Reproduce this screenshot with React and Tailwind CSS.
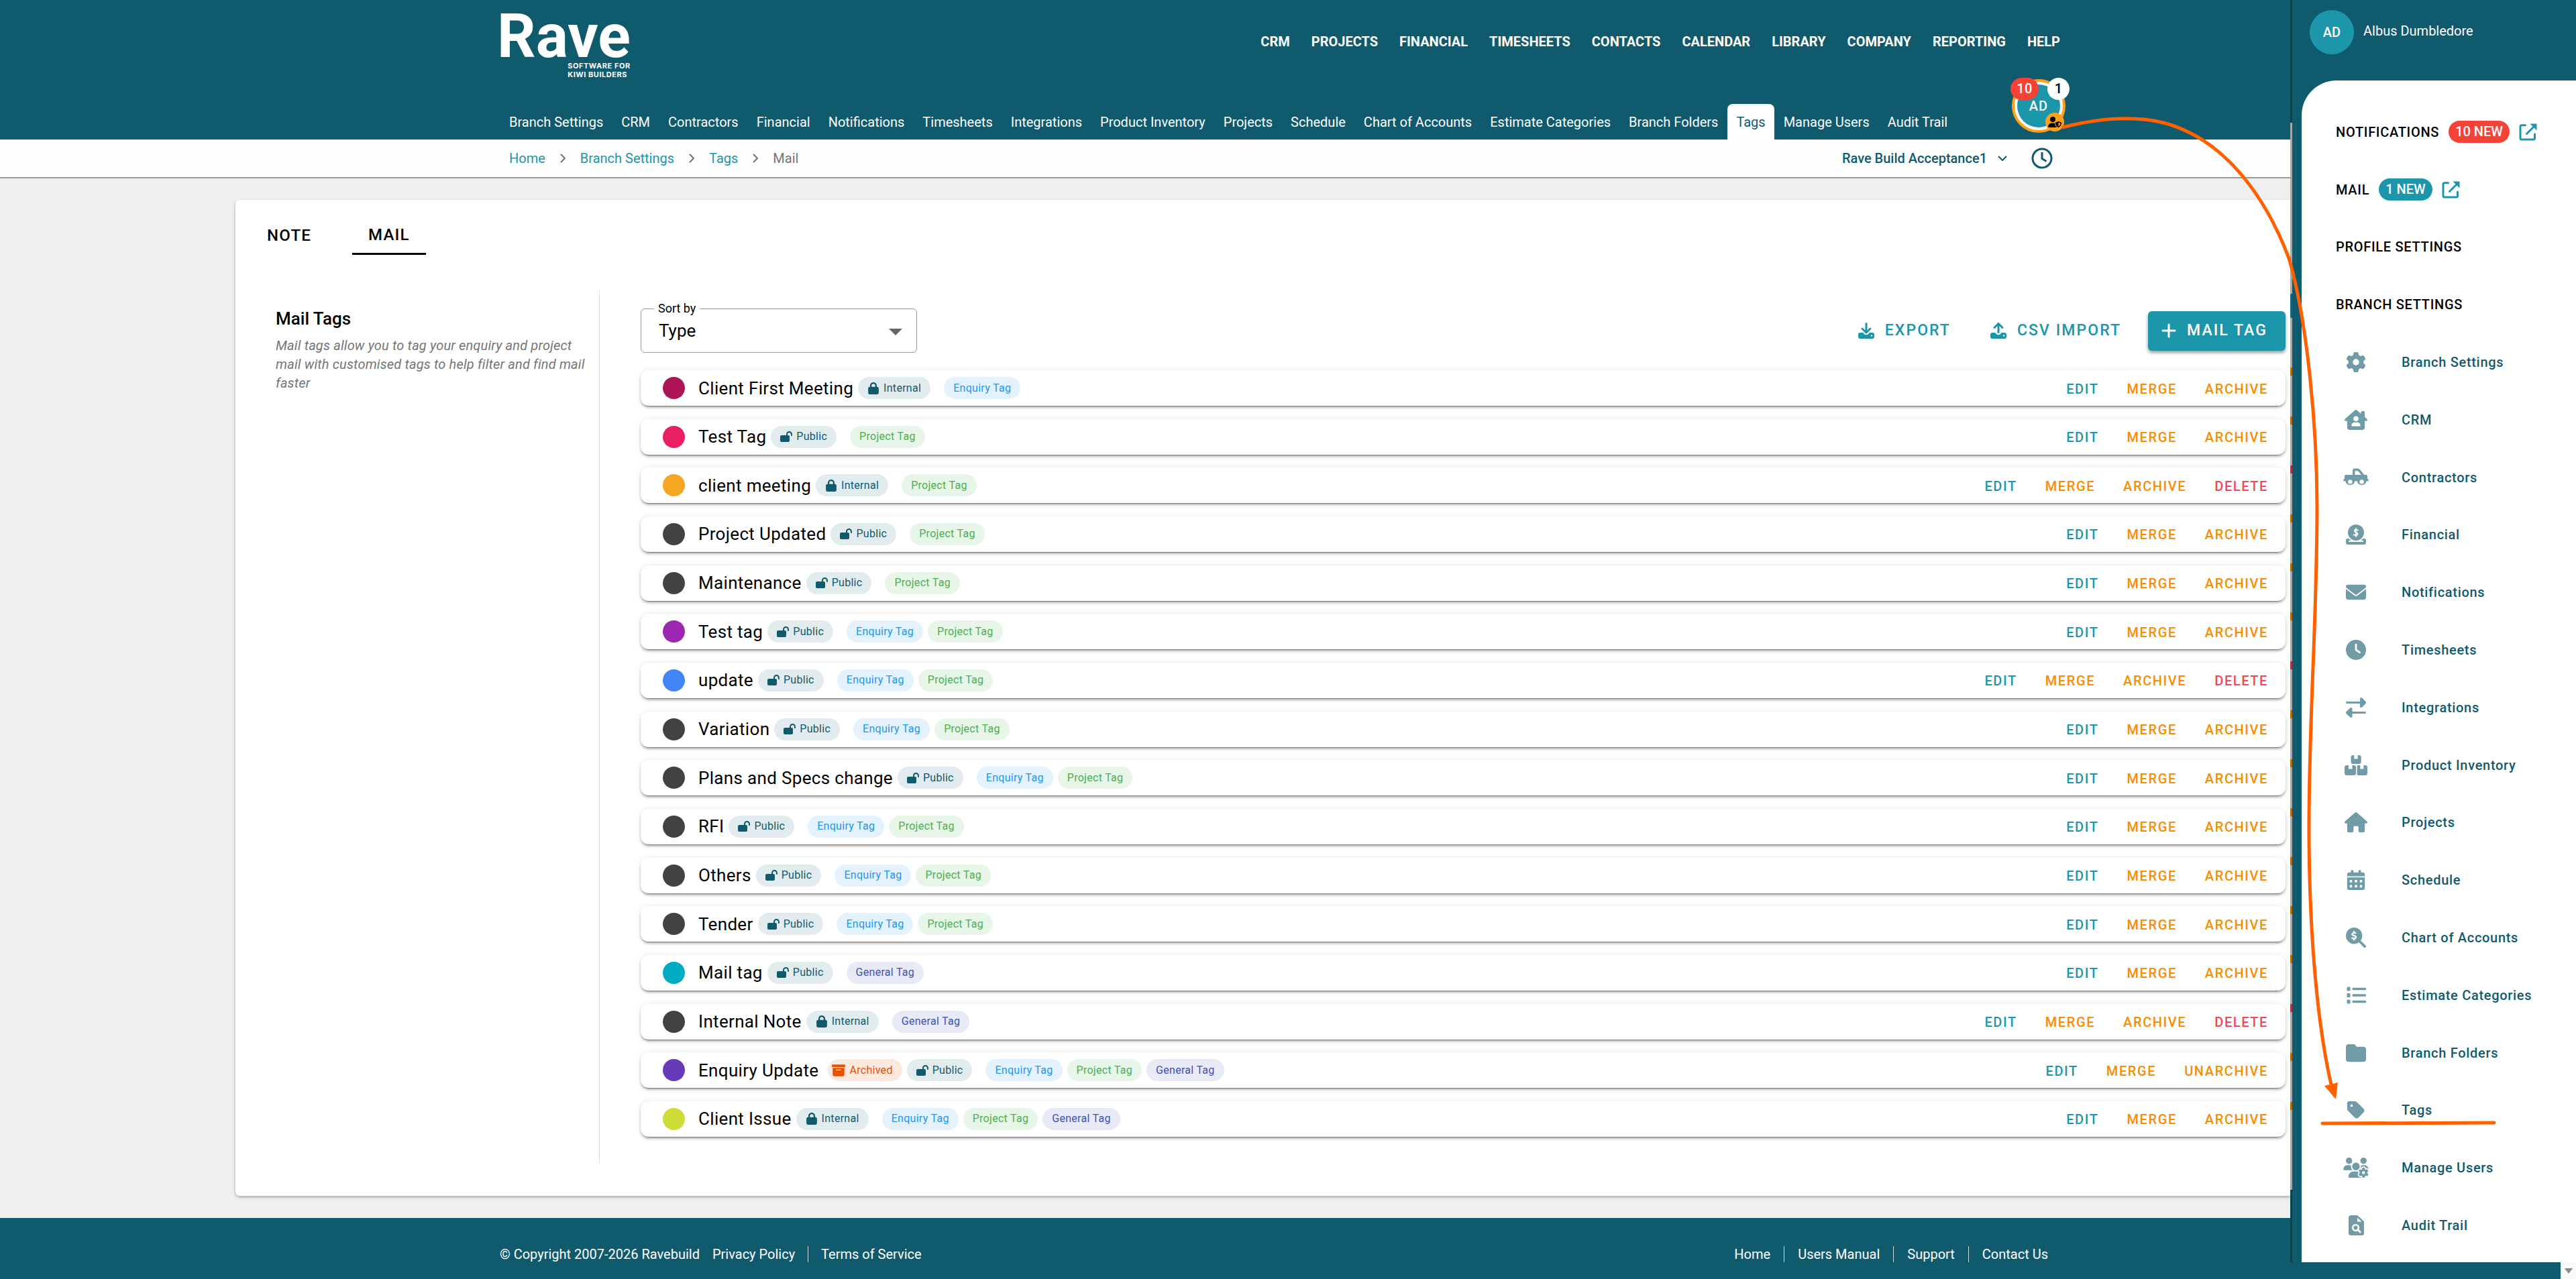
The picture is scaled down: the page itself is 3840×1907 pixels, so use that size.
// App.jsx
import React from "react";
import {
  FaBoxArchive,
  FaCalendarDays,
  FaClock,
  FaEnvelope,
  FaFolder,
  FaGear,
  FaHouse,
  FaHouseChimneyUser,
  FaLock,
  FaLockOpen,
  FaMagnifyingGlassDollar,
  FaTag,
  FaUserShield,
  FaUsersGear,
} from "react-icons/fa6";

const mainNav = [
  "CRM",
  "PROJECTS",
  "FINANCIAL",
  "TIMESHEETS",
  "CONTACTS",
  "CALENDAR",
  "LIBRARY",
  "COMPANY",
  "REPORTING",
  "HELP",
];

const subNav = [
  "Branch Settings",
  "CRM",
  "Contractors",
  "Financial",
  "Notifications",
  "Timesheets",
  "Integrations",
  "Product Inventory",
  "Projects",
  "Schedule",
  "Chart of Accounts",
  "Estimate Categories",
  "Branch Folders",
  "Tags",
  "Manage Users",
  "Audit Trail",
];

const mailTags = [
  { name: "Client First Meeting", dot: "bg-[#ad1457]", scope: "Internal", types: ["Enquiry"] },
  { name: "Test Tag", dot: "bg-[#e91e63]", scope: "Public", types: ["Project"] },
  { name: "client meeting", dot: "bg-[#f5a623]", scope: "Internal", types: ["Project"], canDelete: true },
  { name: "Project Updated", dot: "bg-[#424242]", scope: "Public", types: ["Project"] },
  { name: "Maintenance", dot: "bg-[#424242]", scope: "Public", types: ["Project"] },
  { name: "Test tag", dot: "bg-[#9c27b0]", scope: "Public", types: ["Enquiry", "Project"] },
  { name: "update", dot: "bg-[#4285f4]", scope: "Public", types: ["Enquiry", "Project"], canDelete: true },
  { name: "Variation", dot: "bg-[#424242]", scope: "Public", types: ["Enquiry", "Project"] },
  { name: "Plans and Specs change", dot: "bg-[#424242]", scope: "Public", types: ["Enquiry", "Project"] },
  { name: "RFI", dot: "bg-[#424242]", scope: "Public", types: ["Enquiry", "Project"] },
  { name: "Others", dot: "bg-[#424242]", scope: "Public", types: ["Enquiry", "Project"] },
  { name: "Tender", dot: "bg-[#424242]", scope: "Public", types: ["Enquiry", "Project"] },
  { name: "Mail tag", dot: "bg-[#00acc1]", scope: "Public", types: ["General"] },
  { name: "Internal Note", dot: "bg-[#424242]", scope: "Internal", types: ["General"], canDelete: true },
  {
    name: "Enquiry Update",
    dot: "bg-[#673ab7]",
    scope: "Public",
    types: ["Enquiry", "Project", "General"],
    archived: true,
  },
  { name: "Client Issue", dot: "bg-[#cddc39]", scope: "Internal", types: ["Enquiry", "Project", "General"] },
];

const typeStyles = {
  Enquiry: "bg-[#e3f2fd] text-[#2196f3]",
  Project: "bg-[#e8f5e9] text-[#4caf50]",
  General: "bg-[#e8eaf6] text-[#3f51b5]",
};

/* Icons */
const ContractorIcon = () => (
  <svg viewBox="0 0 38 28" className="w-[38px] h-7" fill="currentColor">
    <path
      fillRule="evenodd"
      d="M14 10V3.500Q14 .5 17 .5H21.500Q23.500 .5 24.800 2L31.500 10H34Q36 10 36 12V16Q38 16.200 38 17.700T36 19.200H34.600A7 7 0 0 1 20.700 19.200H17.300A7 7 0 0 1 3.400 19.200H2Q0 19.200 0 17.700T2 16V12Q2 10 4 10ZM17.500 10H27L22 4.200H17.500ZM10.400 17.200A3.200 3.200 0 1 0 10.400 23.600 3.200 3.200 0 1 0 10.400 17.200ZM27.600 17.200A3.200 3.200 0 1 0 27.600 23.600 3.200 3.200 0 1 0 27.600 17.200Z"
    />
  </svg>
);

const FinancialIcon = () => (
  <svg viewBox="0 0 30 30" className="size-[30px]" fill="currentColor">
    <circle cx="15" cy="12" r="12" />
    <path
      d="M18 8.600Q15 7.300 13.300 8.300Q11.300 10.400 15 11.800Q18.800 13 17 15.400Q15 16.800 11.600 15.400M15 5.800V18.200"
      fill="none"
      stroke="#fff"
      strokeWidth="1.800"
      strokeLinecap="round"
    />
    <path d="M2.500 20.800Q4 20.500 5 21.500Q6.500 23.500 8 24H4V26H26V24H22Q23.500 23.500 25 21.500Q26 20.500 27.500 20.800Q30 21.200 30 23.500V27Q30 30 27 30H3Q0 30 0 27V23.500Q0 21.200 2.500 20.800Z" />
  </svg>
);

const IntegrationsIcon = () => (
  <svg viewBox="0 0 30 30" className="size-[30px]" fill="currentColor">
    <path d="M1.500 6H21V2Q21 0 23 0L24 .5 29.500 6Q30.500 7.500 29.500 9L24 14.500Q21 16 21 13V9H1.500A1.500 1.500 0 0 1 1.500 6ZM28.500 21H9.500V17Q9.500 15 7.500 15L6.500 15.500 .5 21Q-.5 22.500 .5 24L6.500 29.500Q9.500 31 9.500 28V24H28.500A1.500 1.500 0 0 0 28.500 21Z" />
  </svg>
);

const InventoryIcon = () => (
  <svg viewBox="0 0 34 30" className="w-[34px] h-[30px]" fill="currentColor">
    <path d="M14.300 0V5.500H19.700V0H21.500Q24.700 0 24.700 3.200V10Q24.700 13 21.500 13H12.500Q9.500 13 9.500 10V3.200Q9.500 0 12.500 0ZM6 15V20.500H11.500V15H13.700Q17 15 17 18V26.800Q17 30 13.700 30H3.500Q0 30 0 26.800V18Q0 15 3.500 15ZM23.300 15V20.500H28.300V15H31Q34 15 34 18V26.800Q34 30 31 30H20.500Q18.800 29.800 18.600 28.500V16.300Q18.800 15 20.500 15Z" />
  </svg>
);

const CategoriesIcon = () => (
  <svg viewBox="0 0 30 26" className="w-[30px] h-[26px]" fill="currentColor">
    <path d="M2 1H6V6H2ZM2 10.500H6V15.500H2ZM2 20H6V25H2Z" stroke="currentColor" strokeWidth="1" strokeLinejoin="round" />
    <path d="M11 3.500H28.500M11 13H28.500M11 22.500H28.500" stroke="currentColor" strokeWidth="3.500" strokeLinecap="round" />
  </svg>
);

const AuditIcon = () => (
  <svg viewBox="0 0 23 30" className="w-[23px] h-[30px]">
    <path d="M3.500 0H13L23 9V26.500Q23 30 19.500 30H3.500Q0 30 0 26.500V3.500Q0 0 3.500 0Z" fill="currentColor" />
    <path d="M13 3.500L19.500 9.500H13Z" fill="#fff" />
    <circle cx="10.500" cy="18.500" r="4.300" fill="none" stroke="#fff" strokeWidth="2.600" />
    <path d="M14 22L17.300 25" stroke="#fff" strokeWidth="2.800" strokeLinecap="round" />
  </svg>
);

const DriveIcon = ({ up }) => (
  <svg viewBox="0 0 24 24" className="size-6" fill="none">
    <path
      d="M3 15H7.500Q9 18.300 12 18.300T16.500 15H21Q24 15 24 18V21Q24 24 21 24H3Q0 24 0 21V18Q0 15 3 15Z"
      fill="currentColor"
    />
    <circle cx="20" cy="19.500" r="1.200" fill="#fff" />
    <path
      d={up ? "M12 14.500V2M6 7.500L12 1.500 18 7.500" : "M12 1.500V14M6 9L12 15 18 9"}
      stroke="currentColor"
      strokeWidth="3"
      strokeLinecap="round"
      strokeLinejoin="round"
    />
  </svg>
);

const OpenIcon = () => (
  <svg viewBox="0 0 28 28" className="size-7" fill="none" stroke="currentColor" strokeWidth="3">
    <path d="M9.500 3.800H4Q2 3.800 2 5.800V23Q2 25 4 25H21.500Q23.500 25 23.500 23V17" strokeLinecap="round" />
    <path d="M11.500 16.500L23 5" strokeLinecap="round" />
    <path d="M16.500 1.500H26.500V11.500Z" fill="currentColor" stroke="none" />
  </svg>
);

const ChevronRight = () => (
  <svg viewBox="0 0 8 14" className="w-2 h-3.5" fill="none" stroke="#757575" strokeWidth="2">
    <path d="M1 1L7 7 1 13" />
  </svg>
);

const branchItems = [
  { name: "Branch Settings", icon: <FaGear size={30} /> },
  { name: "CRM", icon: <FaHouseChimneyUser size={30} className="w-[34px]" /> },
  { name: "Contractors", icon: <ContractorIcon /> },
  { name: "Financial", icon: <FinancialIcon /> },
  { name: "Notifications", icon: <FaEnvelope size={30} /> },
  { name: "Timesheets", icon: <FaClock size={30} /> },
  { name: "Integrations", icon: <IntegrationsIcon /> },
  { name: "Product Inventory", icon: <InventoryIcon /> },
  { name: "Projects", icon: <FaHouse size={30} className="w-[34px]" /> },
  { name: "Schedule", icon: <FaCalendarDays size={30} /> },
  { name: "Chart of Accounts", icon: <FaMagnifyingGlassDollar size={30} /> },
  { name: "Estimate Categories", icon: <CategoriesIcon /> },
  { name: "Branch Folders", icon: <FaFolder size={30} /> },
  { name: "Tags", icon: <FaTag size={30} /> },
  { name: "Manage Users", icon: <FaUsersGear size={30} className="w-[38px]" /> },
  { name: "Audit Trail", icon: <AuditIcon /> },
];

const Logo = () => (
  <a href="#" className="flex flex-col items-end pt-[18px] text-white">
    <span className="text-[90px] leading-[74px] font-bold">Rave</span>
    <span className="text-[11px] leading-[13px] font-bold tracking-wider font-['Inter',sans-serif]">
      SOFTWARE FOR
      <br />
      KIWI BUILDERS
    </span>
  </a>
);

const UserAvatar = () => (
  <button className="relative size-20 rounded-full border-4 border-[#ffa01c] bg-white p-1 mb-2.5" aria-label="Account">
    <span className="flex size-full items-center justify-center rounded-full bg-[#1b96ab] text-xl font-medium tracking-wider text-white">
      AD
    </span>
    <span className="absolute -top-1.5 -left-1.5 h-[33px] w-[42px] rounded-full bg-[#f44336] text-xl leading-[33px] font-medium tracking-wide text-white">
      10
    </span>
    <span className="absolute -top-1.5 -right-2.5 size-[33px] rounded-full bg-white text-xl leading-[33px] font-medium text-black">
      1
    </span>
    <span className="absolute -right-0.5 -bottom-0.5 flex size-7 items-center justify-center rounded-full bg-[#ffa01c] text-black">
      <FaUserShield size={20} />
    </span>
  </button>
);

const Header = () => (
  <header className="bg-[#105a6d] pl-[741px] pr-[335px] text-white">
    <div className="flex h-[118px] items-start justify-between pr-2">
      <Logo />
      <nav className="flex gap-8 pt-12 text-xl leading-7 font-bold">
        {mainNav.map((item) => (
          <a key={item} href="#">
            {item}
          </a>
        ))}
      </nav>
    </div>
    <div className="flex items-end justify-between pl-[5px]">
      <nav className="flex gap-px text-xl whitespace-nowrap">
        {subNav.map((item) => (
          <a
            key={item}
            href="#"
            className={`h-[53px] px-[13px] leading-[55px] ${
              item === "Tags" ? "rounded-t-lg bg-white text-[#105a6d]" : ""
            }`}
          >
            {item}
          </a>
        ))}
      </nav>
      <UserAvatar />
    </div>
  </header>
);

const Breadcrumbs = () => (
  <div className="flex items-center justify-between border-b-2 border-[#999] bg-[#fdfdfd] pl-[759px] pr-[354px] text-xl leading-[56px]">
    <nav className="flex items-center gap-[22px] text-[#1b96ab]">
      <a href="#">Home</a>
      <ChevronRight />
      <a href="#">Branch Settings</a>
      <ChevronRight />
      <a href="#">Tags</a>
      <ChevronRight />
      <span className="text-[#757575]">Mail</span>
    </nav>
    <div className="flex items-center text-[#105a6d]">
      <button className="flex items-center gap-4 font-medium">
        Rave Build Acceptance1
        <svg viewBox="0 0 14 8" className="w-3.5 h-2" fill="none" stroke="currentColor" strokeWidth="2">
          <path d="M1 1L7 7 13 1" />
        </svg>
      </button>
      <button className="ml-9" aria-label="Recent">
        <svg viewBox="0 0 32 32" className="size-8" fill="none" stroke="currentColor" strokeWidth="3">
          <circle cx="16" cy="16" r="14" />
          <path d="M16 7V16.500L22.500 20.500" />
        </svg>
      </button>
    </div>
  </div>
);

const Chip = ({ className, children }) => (
  <span className={`flex h-[33px] items-center rounded-full px-3.5 text-base tracking-[0.0178em] ${className}`}>
    {children}
  </span>
);

const TagRow = ({ tag }) => (
  <li className="flex h-[53px] items-center rounded-xl bg-white pr-[26px] pl-[33px] shadow-[0_4px_1px_-3px_rgba(0,0,0,0.35),0_3px_3px_rgba(0,0,0,0.22),0_1px_8px_rgba(0,0,0,0.12)]">
    <span className={`size-[33px] rounded-full ${tag.dot}`} />
    <span className="ml-5 text-[26px] leading-8 tracking-[0.0125em]">{tag.name}</span>
    {tag.archived && (
      <Chip className="ml-3.5 bg-[#fbe9e0] pl-1.5 text-[#e65100]">
        <FaBoxArchive size={20} className="mr-1.5" />
        Archived
      </Chip>
    )}
    <Chip className="ml-[7px] bg-[#e2ebed] text-[#105a6d]">
      {tag.scope === "Internal" ? (
        <FaLock size={18} className="mr-1.5" />
      ) : (
        <FaLockOpen size={18} className="mr-1.5" />
      )}
      {tag.scope}
    </Chip>
    <span className="ml-5 flex gap-[7px]">
      {tag.types.map((type) => (
        <Chip key={type} className={typeStyles[type]}>
          {type} Tag
        </Chip>
      ))}
    </span>
    <span className="ml-auto flex gap-[42px] pt-0.5 text-xl font-medium tracking-[0.08em] text-[#fb8c00]">
      <button className="text-[#1b96ab]">EDIT</button>
      <button>MERGE</button>
      <button>{tag.archived ? "UNARCHIVE" : "ARCHIVE"}</button>
      {tag.canDelete && <button className="text-[#f0475b]">DELETE</button>}
    </span>
  </li>
);

const Toolbar = () => (
  <div className="flex items-center">
    <div className="relative">
      <label htmlFor="sort" className="absolute -top-3.5 left-5 bg-white px-1.5 text-lg leading-7">
        Sort by
      </label>
      <select
        id="sort"
        className="h-[66px] w-[412px] appearance-none rounded-md border border-[#999] bg-white px-[26px] text-[26px]"
      >
        <option>Type</option>
      </select>
      <svg viewBox="0 0 20 10" className="pointer-events-none absolute top-[30px] right-[22px] h-2.5 w-5" fill="#666">
        <path d="M0 0H20L10 10Z" />
      </svg>
    </div>
    <div className="ml-auto flex items-center text-[23px] font-medium tracking-[0.09em] text-[#1b96ab]">
      <button className="flex items-center gap-4">
        <DriveIcon />
        EXPORT
      </button>
      <button className="ml-[59px] flex items-center gap-4">
        <DriveIcon up />
        CSV IMPORT
      </button>
      <button className="ml-10 flex h-[59px] items-center gap-4 rounded-md bg-[#1b96ab] pr-[27px] pl-5 text-white shadow-[0_3px_5px_rgba(0,0,0,0.4)]">
        <svg viewBox="0 0 22 22" className="size-[22px]" stroke="currentColor" strokeWidth="3" strokeLinecap="round">
          <path d="M11 2V20M2 11H20" />
        </svg>
        MAIL TAG
      </button>
    </div>
  </div>
);

const Footer = () => (
  <footer className="flex h-[91px] items-start justify-between bg-[#105a6d] pt-10 pr-[361px] pl-[745px] text-xl leading-7 text-white">
    <div className="flex items-center gap-[19px]">
      <span>© Copyright 2007-2026 Ravebuild</span>
      <a href="#">Privacy Policy</a>
      <span className="h-6 w-px bg-white/80" />
      <a href="#">Terms of Service</a>
    </div>
    <div className="flex items-center gap-5">
      <a href="#">Home</a>
      <span className="h-6 w-px bg-white/80" />
      <a href="#">Users Manual</a>
      <span className="h-6 w-px bg-white/80" />
      <a href="#">Support</a>
      <span className="h-6 w-px bg-white/80" />
      <a href="#">Contact Us</a>
    </div>
  </footer>
);

const UserDrawer = () => (
  <aside className="flex w-[426px] shrink-0 flex-col bg-[#105a6d] text-xl">
    <div className="flex flex-1">
      {/* Dimmed page edge */}
      <div className="flex w-[3px] flex-col bg-[#a6a9a9]">
        <div className="h-[183px] bg-[#0b4250]" />
        <div className="mt-[255px] h-9 bg-[#136878]" />
        <ul className="flex flex-col gap-[61px] pt-[74px]">
          {mailTags.map((tag) => (
            <li key={tag.name} className={`h-3 ${tag.canDelete ? "bg-[#b03346]" : "bg-[#b06a0a]"}`} />
          ))}
        </ul>
        <div className="mt-auto h-[108px] bg-[#0b4250]" />
      </div>
      <div className="flex flex-1 flex-col pl-3.5">
        <div className="flex h-[120px] items-start gap-3.5 pt-[15px] pl-3 text-white">
          <span className="flex size-[66px] items-center justify-center rounded-full bg-[#1b96ab] font-medium">AD</span>
          <span className="pt-[17px] leading-7">Albus Dumbledore</span>
        </div>
        <nav className="flex flex-1 flex-col rounded-tl-[52px] bg-white pt-[34px] pb-3 pl-[51px] font-medium">
          <div className="flex flex-1 items-center">
            <a href="#" className="tracking-[0.035em]">
              NOTIFICATIONS
            </a>
            <span className="ml-3.5 h-[33px] rounded-full bg-[#f44336] px-2.5 leading-[33px] text-white">10 NEW</span>
            <a href="#" className="ml-3.5 text-[#1b96ab]" aria-label="Open notifications">
              <OpenIcon />
            </a>
          </div>
          <div className="flex flex-1 items-center">
            <a href="#" className="tracking-[0.035em]">
              MAIL
            </a>
            <span className="ml-3.5 h-[33px] rounded-full bg-[#1b96ab] px-2.5 leading-[33px] text-white">1 NEW</span>
            <a href="#" className="ml-3.5 text-[#1b96ab]" aria-label="Open mail">
              <OpenIcon />
            </a>
          </div>
          <a href="#" className="flex flex-1 items-center tracking-[0.035em]">
            PROFILE SETTINGS
          </a>
          <a href="#" className="flex flex-1 items-center tracking-[0.035em]">
            BRANCH SETTINGS
          </a>
          {branchItems.map((item) => (
            <a key={item.name} href="#" className="flex flex-1 items-center tracking-[0.035em] text-[#105a6d]">
              <span className="flex w-[60px] justify-center text-[#709ba7]">{item.icon}</span>
              <span className="ml-[38px]">{item.name}</span>
            </a>
          ))}
        </nav>
      </div>
    </div>
    <div className="flex h-[25px] w-[23px] items-center justify-center self-end bg-[#fafafa]">
      <svg viewBox="0 0 14 9" className="w-3.5 h-2" fill="#8b8b8b">
        <path d="M0 0H14L7 9Z" />
      </svg>
    </div>
  </aside>
);

// Hand drawn pointer from the avatar to the Tags item
const PointerArrow = () => (
  <svg
    viewBox="3040 0 800 1700"
    className="pointer-events-none absolute top-0 right-0 h-[1700px] w-[800px]"
    fill="none"
    stroke="#ff6000"
    strokeWidth="5"
  >
    <path d="M3074 190C3130 176 3180 172 3225 183C3320 208 3380 300 3412 385C3440 480 3454 640 3454 755C3454 930 3441 1080 3442 1250C3443 1400 3455 1530 3475 1617" />
    <path d="M3465 1619L3485 1614 3482 1639Z" fill="#ff6000" stroke="none" />
    <path d="M3462 1675L3718 1674" strokeLinecap="round" />
  </svg>
);

const App = () => {
  return (
    <div className="relative flex min-h-screen bg-[#efefef] font-['Roboto',sans-serif] text-black">
      <div className="flex min-w-0 flex-1 flex-col">
        <Header />
        <Breadcrumbs />
        <main className="flex flex-1 flex-col overflow-hidden pt-8 pb-[33px] pl-[351px]">
          <section className="flex flex-1 flex-col rounded-l-md bg-white pb-12 shadow-[0_2px_4px_rgba(0,0,0,0.3)]">
            <div className="flex pt-6 pl-5 text-2xl font-medium tracking-wider">
              <button className="h-[58px] px-[27px]">NOTE</button>
              <button className="ml-[34px] h-[58px] border-b-3 border-black px-6">MAIL</button>
            </div>
            <div className="mt-[53px] flex flex-1 pl-[60px]">
              <div className="w-[483px] shrink-0 border-r border-[#ddd] pt-6 pr-4">
                <h1 className="text-[26px] leading-9 font-medium">Mail Tags</h1>
                <p className="mt-2 text-xl leading-7 tracking-[0.008em] text-[#757575] italic">
                  Mail tags allow you to tag your enquiry and project mail with customised tags to help filter and find
                  mail faster
                </p>
              </div>
              <div className="flex flex-1 flex-col pt-[27px] pr-[7px] pb-10 pl-[61px]">
                <Toolbar />
                <ul className="mt-[26px] flex flex-1 flex-col justify-between">
                  {mailTags.map((tag) => (
                    <TagRow key={tag.name} tag={tag} />
                  ))}
                </ul>
              </div>
            </div>
          </section>
        </main>
        <Footer />
      </div>
      <UserDrawer />
      <PointerArrow />
    </div>
  );
};

export default App;
